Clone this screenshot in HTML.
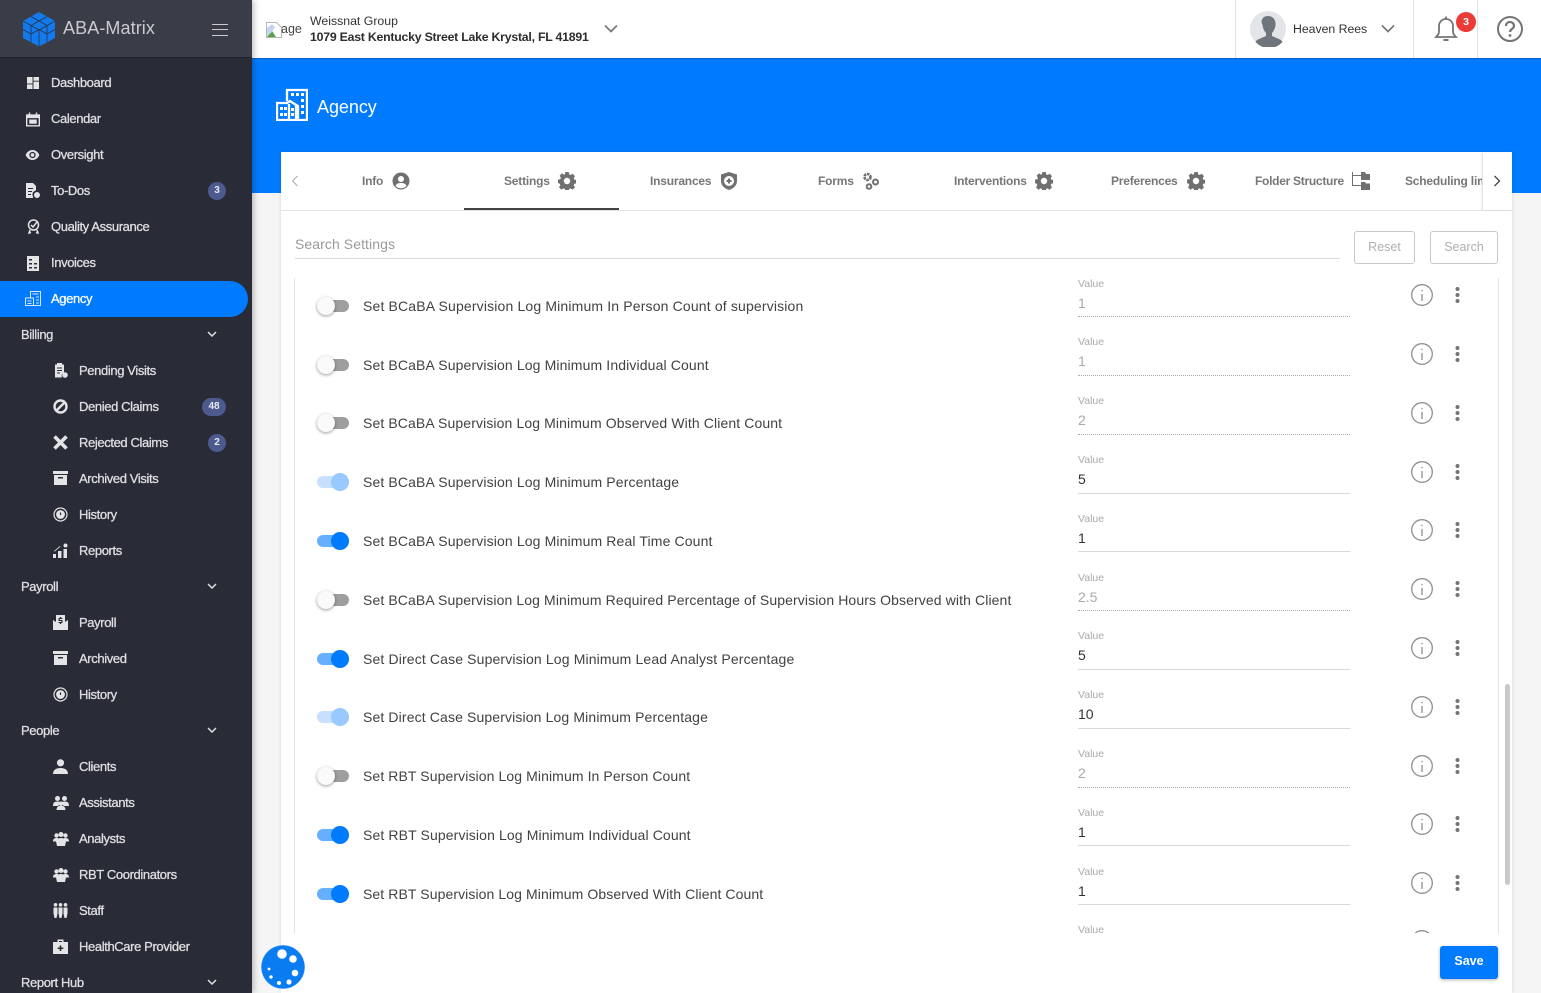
<!DOCTYPE html>
<html><head><meta charset="utf-8"><title>Agency</title>
<style>
html,body{margin:0;padding:0;width:1541px;height:993px;overflow:hidden;background:#f5f5f5;font-family:"Liberation Sans",sans-serif}
*{box-sizing:border-box}
.a{position:absolute}
#side{position:absolute;left:0;top:0;width:252px;height:993px;background:#292c37;box-shadow:2px 0 6px rgba(0,0,0,.25);overflow:hidden;z-index:5}
#sh{position:absolute;left:0;top:0;width:252px;height:58px;background:#3a3d48;border-bottom:1px solid #22242c}
.m{position:absolute;color:#dedfe2;font-size:13px;letter-spacing:-.38px;line-height:38px;height:36px;white-space:nowrap;-webkit-text-stroke:.3px #dedfe2}
.i{position:absolute;fill:#e3e4e6}
.b{position:absolute;height:18px;border-radius:9px;background:#4c5a8e;color:#e8eaf2;font-size:10px;font-weight:700;text-align:center;line-height:18px}
.ch{position:absolute;left:207px;width:10px;height:6px;fill:none;stroke:#dedfe2;stroke-width:1.5}
.tab{position:absolute;top:173px;font-size:12px;font-weight:700;color:#777;letter-spacing:-.2px;white-space:nowrap;line-height:16px}
.row{position:absolute;left:-1px;width:1210px;height:58px}
.tr{position:absolute;left:23px;top:17px;width:32px;height:12px;border-radius:6px}
.th{position:absolute;top:14px;width:18px;height:18px;border-radius:50%}
.off .tr{background:#9e9e9e}.off .th{left:23px;background:#fafafa;box-shadow:0 1px 3px rgba(0,0,0,.4)}
.on .tr{background:#66afff}.on .th{left:37px;background:#007bff}
.lt .tr{background:#c6e0fd}.lt .th{left:37px;background:#99caff}
.lb{position:absolute;left:69px;top:14px;font-size:14px;letter-spacing:.13px;color:#424242;line-height:18px;white-space:nowrap}
.p .lb{top:15px}.p .tr{top:18px}.p .th{top:15px}
.vl{position:absolute;left:784px;top:-5px;font-size:10.5px;color:#aaa;line-height:13px}
.v{position:absolute;left:784px;top:11px;font-size:14px;color:#333;line-height:18px}
.off .v{color:#aaa}
.ln{position:absolute;left:784px;top:33px;width:272px;height:1px;background:#d8d8d8}
.off .ln{height:0;background:none;border-top:1px dotted #aaa}
.inf{position:absolute;left:1116px;top:0;width:24px;height:24px;fill:none;stroke:#8f8f8f}
.keb{position:absolute;left:1161px;top:4px;width:5px;height:16px;fill:#757575}
.q .inf{top:1px}.q .keb{top:5px}.q .ln{top:34px}
</style></head><body>

<div id="side">
<div id="sh"></div>
<svg class="a" style="left:22px;top:11px" width="34" height="36" viewBox="0 0 34 36"><path d="M17 1l16 9v17l-16 8.500L1 27V10z" fill="#1479ea"/><path d="M1 10l16 9 16-9M17 19v16.500M9 5.500l16 9M25 5.500l-16 9M9 14.500v16.500M25 14.500v16.500M1 18.500l8 4.500 8-4.500 8 4.500 8-4.500" fill="none" stroke="#25344f" stroke-width=".8"/></svg>
<div class="a" style="left:63px;top:16px;font-size:18px;color:#c9cbd0;line-height:24px;letter-spacing:.1px">ABA-Matrix</div>
<div class="a" style="left:212px;top:24px;width:16px;height:12px;border-top:1.500px solid #c9cbd0;border-bottom:1.500px solid #c9cbd0"><div style="margin-top:3.500px;height:1.500px;background:#c9cbd0"></div></div>

<div class="a" style="left:0;top:281px;width:248px;height:36px;background:#007bff;border-radius:0 18px 18px 0"></div>

<div class="m" style="left:51px;top:64px">Dashboard</div>
<div class="m" style="left:51px;top:100px">Calendar</div>
<div class="m" style="left:51px;top:136px">Oversight</div>
<div class="m" style="left:51px;top:172px">To-Dos</div>
<div class="m" style="left:51px;top:208px">Quality Assurance</div>
<div class="m" style="left:51px;top:244px">Invoices</div>
<div class="m" style="left:51px;top:280px;color:#fff;-webkit-text-stroke:.3px #fff">Agency</div>
<div class="m" style="left:21px;top:316px">Billing</div>
<div class="m" style="left:79px;top:352px">Pending Visits</div>
<div class="m" style="left:79px;top:388px">Denied Claims</div>
<div class="m" style="left:79px;top:424px">Rejected Claims</div>
<div class="m" style="left:79px;top:460px">Archived Visits</div>
<div class="m" style="left:79px;top:496px">History</div>
<div class="m" style="left:79px;top:532px">Reports</div>
<div class="m" style="left:21px;top:568px">Payroll</div>
<div class="m" style="left:79px;top:604px">Payroll</div>
<div class="m" style="left:79px;top:640px">Archived</div>
<div class="m" style="left:79px;top:676px">History</div>
<div class="m" style="left:21px;top:712px">People</div>
<div class="m" style="left:79px;top:748px">Clients</div>
<div class="m" style="left:79px;top:784px">Assistants</div>
<div class="m" style="left:79px;top:820px">Analysts</div>
<div class="m" style="left:79px;top:856px">RBT Coordinators</div>
<div class="m" style="left:79px;top:892px">Staff</div>
<div class="m" style="left:79px;top:928px">HealthCare Provider</div>
<div class="m" style="left:21px;top:964px">Report Hub</div>

<svg class="ch" style="top:331px" viewBox="0 0 10 6"><path d="M1 1l4 4 4-4"/></svg>
<svg class="ch" style="top:583px" viewBox="0 0 10 6"><path d="M1 1l4 4 4-4"/></svg>
<svg class="ch" style="top:727px" viewBox="0 0 10 6"><path d="M1 1l4 4 4-4"/></svg>
<svg class="ch" style="top:979px" viewBox="0 0 10 6"><path d="M1 1l4 4 4-4"/></svg>

<div class="b" style="left:208px;top:182px;width:18px">3</div>
<div class="b" style="left:202px;top:398px;width:24px">48</div>
<div class="b" style="left:208px;top:434px;width:18px">2</div>

<!-- top icons -->
<svg class="i" style="left:27px;top:77px" width="12" height="12" viewBox="0 0 13 13"><path d="M0 0h6v7H0zM7 0h6v4H7zM7 5h6v8H7zM0 8h6v5H0z"/></svg>
<svg class="i" style="left:26px;top:112px" width="14" height="15" viewBox="0 0 15 15"><path fill-rule="evenodd" d="M3 0h1.500v2h6V0H12v2h3v13H0V2h3zM1.500 6v7.500h12V6zM3.500 7.500h8v4.500h-8z"/></svg>
<svg class="i" style="left:25px;top:150px" width="15" height="10" viewBox="0 0 15 11"><path fill-rule="evenodd" d="M7.500 0C11 0 14 2.500 15 5.500 14 8.500 11 11 7.500 11S1 8.500 0 5.500C1 2.500 4 0 7.500 0zm0 2a3.500 3.500 0 100 7 3.500 3.500 0 000-7zm0 1.500a2 2 0 110 4 2 2 0 010-4z"/></svg>
<svg class="i" style="left:26px;top:183px" width="14" height="15" viewBox="0 0 14 15"><path fill-rule="evenodd" d="M0 0h7l3 3v4.500a4 4 0 00-3 6V15H0zM2 5v1h5V5zM2 8v1h4V8zM2 11v1h3v-1z"/><circle cx="11" cy="12" r="3"/></svg>
<svg class="a" style="left:27px;top:219px" width="13" height="15" viewBox="0 0 13 15" fill="none" stroke="#e3e4e6" stroke-width="1.500"><circle cx="6.500" cy="6" r="5"/><path d="M4 6l2 2 4-5M3 11l-1 3 2-.5M10 11l1 3-2-.5"/></svg>
<svg class="i" style="left:27px;top:256px" width="12" height="15" viewBox="0 0 12 15"><path fill-rule="evenodd" d="M0 0h12v15H0zM2 3v1.500h3V3zM2 7v1.500h3V7zM7 7v1.500h3V7zM2 11v1.500h3V11zM7 11v1.500h3V11z"/></svg>
<svg class="a" style="left:25px;top:291px" width="16" height="15" viewBox="0 0 16 15" fill="none" stroke="#d5e8ff"><path d="M5.500 7V.5h10v14H.5V7h8v7.500M7.500 3h6M11 6h3M11 9h3M11 12h3M2.500 10h4M2.500 12.500h4"/></svg>

<!-- sub icons -->
<svg class="i" style="left:54px;top:363px" width="14" height="15" viewBox="0 0 14 15"><path fill-rule="evenodd" d="M3 0h5v1.500h2v8a3.500 3.500 0 00-2 5H1V1.500h2zM3 4.500v1h5v-1zM3 7v1h5V7zM3 9.500v1h3v-1z"/><circle cx="11" cy="12" r="2.800"/></svg>
<svg class="a" style="left:53px;top:399px" width="15" height="15" viewBox="0 0 15 15" fill="none" stroke="#e3e4e6" stroke-width="2.400"><circle cx="7.500" cy="7.500" r="6"/><path d="M3.500 11.500l8-8"/></svg>
<svg class="a" style="left:53px;top:435px" width="15" height="15" viewBox="0 0 15 15" fill="none" stroke="#e3e4e6" stroke-width="3.600"><path d="M1.500 1.500l12 12M13.500 1.500l-12 12"/></svg>
<svg class="i" style="left:53px;top:471px" width="15" height="14" viewBox="0 0 15 14"><path fill-rule="evenodd" d="M0 0h15v3H0zM1 4h13v10H1zM5 6v1.500h5V6z"/></svg>
<svg class="a" style="left:53px;top:507px" width="15" height="15" viewBox="0 0 15 15" fill="none" stroke="#e3e4e6" stroke-width="1.200"><circle cx="7.500" cy="7.500" r="6.500"/><circle cx="7.500" cy="7.500" r="3.800" fill="#e3e4e6"/><path d="M7.500 5.500v2.500" stroke="#292c37"/></svg>
<svg class="i" style="left:53px;top:543px" width="15" height="15" viewBox="0 0 15 15"><path d="M0 11h3v4H0zM5 8h3.500v7H5zM10.500 6H14v9h-3.500z"/><circle cx="12.500" cy="2.500" r="2"/><path d="M1 8l6-5 .5.600-6 5z"/></svg>
<svg class="i" style="left:53px;top:615px" width="15" height="15" viewBox="0 0 15 15"><path fill-rule="evenodd" d="M3 0h9v7l3-2v10H0V5l3 2zM6.800 2v1H5.500v3h2.800v1H5.500v1h1.300v1h1.400V8h1.300V5H6.700V4h2.800V3H8.200V2z"/></svg>
<svg class="i" style="left:53px;top:651px" width="15" height="14" viewBox="0 0 15 14"><path fill-rule="evenodd" d="M0 0h15v3H0zM1 4h13v10H1zM5 6v1.500h5V6z"/></svg>
<svg class="a" style="left:53px;top:687px" width="15" height="15" viewBox="0 0 15 15" fill="none" stroke="#e3e4e6" stroke-width="1.200"><circle cx="7.500" cy="7.500" r="6.500"/><circle cx="7.500" cy="7.500" r="3.800" fill="#e3e4e6"/><path d="M7.500 5.500v2.500" stroke="#292c37"/></svg>
<svg class="i" style="left:53px;top:759px" width="15" height="15" viewBox="0 0 15 15"><circle cx="7.500" cy="3.800" r="3.600"/><path d="M0 15c0-4 3-6 7.500-6S15 11 15 15z"/></svg>
<svg class="i" style="left:53px;top:796px" width="16" height="14" viewBox="0 0 16 14"><circle cx="4.500" cy="2.500" r="2.500"/><circle cx="11.500" cy="2.500" r="2.500"/><path d="M0 10c0-3 1-4.500 4.500-4.500S7 7 7 8L5 10zM16 10c0-3-1-4.500-4.500-4.500S9 7 9 8l2 2z"/><circle cx="8" cy="7.500" r="2"/><path d="M3.500 14c0-3 2-4.500 4.500-4.500s4.500 1.500 4.500 4.500z"/></svg>
<svg class="i" style="left:53px;top:832px" width="16" height="14" viewBox="0 0 16 14"><circle cx="3.500" cy="3.500" r="2.200"/><circle cx="12.500" cy="3.500" r="2.200"/><circle cx="8" cy="2.500" r="2.500"/><path d="M0 9.500c0-2.500 1.200-3.500 3.500-3.500 1 0 1.500.2 2 .5 1.500-.6 3.500-.6 5 0 .5-.3 1-.5 2-.5 2.300 0 3.500 1 3.500 3.500h-3L12 14H4l-1-4.500z"/></svg>
<svg class="i" style="left:53px;top:868px" width="16" height="14" viewBox="0 0 16 14"><circle cx="3.500" cy="3.500" r="2.200"/><circle cx="12.500" cy="3.500" r="2.200"/><circle cx="8" cy="2.500" r="2.500"/><path d="M0 9.500c0-2.500 1.200-3.500 3.500-3.500 1 0 1.500.2 2 .5 1.500-.6 3.500-.6 5 0 .5-.3 1-.5 2-.5 2.300 0 3.500 1 3.500 3.500h-3L12 14H4l-1-4.500z"/></svg>
<svg class="i" style="left:53px;top:903px" width="15" height="15" viewBox="0 0 15 15"><circle cx="2.500" cy="1.800" r="1.800"/><circle cx="7.500" cy="1.800" r="1.800"/><circle cx="12.500" cy="1.800" r="1.800"/><path d="M.5 4.500h4v6l-1 4.500h-2l-1-4.500zM5.500 4.500h4v6l-1 4.500h-2l-1-4.500zM10.500 4.500h4v6l-1 4.500h-2l-1-4.500z"/></svg>
<svg class="i" style="left:53px;top:939px" width="15" height="15" viewBox="0 0 15 15"><path fill-rule="evenodd" d="M4.500 3V.5h6V3H15v12H0V3zM6 3h3V2H6zM6.700 6.500v2h-2V10h2v2h1.600v-2h2V8.500h-2v-2z"/></svg>
</div>

<!-- top bar -->
<div class="a" style="left:252px;top:0;width:1289px;height:58px;background:#fff"></div>
<svg class="a" style="left:266px;top:22px" width="16" height="16" viewBox="0 0 16 16"><path d="M.5.500h10l5 5v10H.5z" fill="#fff" stroke="#b5b5b5"/><path d="M1 15l5-6 4 6z" fill="#5a9e4a"/><path d="M1 6l5-4 3 3-4 6-4 3z" fill="#c3d5f0"/></svg>
<div class="a" style="left:281px;top:21px;font-size:12.500px;color:#444;line-height:16px">age</div>
<div class="a" style="left:310px;top:14px;font-size:12.300px;color:#333;line-height:15px;white-space:nowrap">Weissnat Group</div>
<div class="a" style="left:310px;top:29px;font-size:12.300px;font-weight:700;color:#2d2d2d;line-height:16px;white-space:nowrap;letter-spacing:-.23px">1079 East Kentucky Street Lake Krystal, FL 41891</div>
<svg class="a" style="left:604px;top:24px" width="14" height="9" viewBox="0 0 14 9" fill="none" stroke="#777" stroke-width="1.700"><path d="M1 1.500l6 6 6-6"/></svg>

<div class="a" style="left:1235px;top:0;width:1px;height:58px;background:#e2e2e2"></div>
<div class="a" style="left:1413px;top:0;width:1px;height:58px;background:#e2e2e2"></div>
<div class="a" style="left:1477px;top:0;width:1px;height:58px;background:#e2e2e2"></div>
<svg class="a" style="left:1250px;top:11px" width="36" height="36" viewBox="0 0 36 36"><circle cx="18" cy="18" r="18" fill="#e3e5e9"/><path d="M18 5c5 0 8 4 7.500 9-.3 3-1.500 6-3.500 8v3l8 3.500c1.500.7 2 1.500 2.500 2.500A18 18 0 015.500 31c.5-1 1-1.800 2.500-2.500l8-3.500v-3c-2-2-3.200-5-3.500-8C10 9 13 5 18 5z" fill="#70757d"/></svg>
<div class="a" style="left:1293px;top:21px;font-size:12.300px;color:#333;line-height:16px;white-space:nowrap;letter-spacing:-.03px">Heaven Rees</div>
<svg class="a" style="left:1381px;top:24px" width="14" height="9" viewBox="0 0 14 9" fill="none" stroke="#777" stroke-width="1.700"><path d="M1 1.500l6 6 6-6"/></svg>
<svg class="a" style="left:1434px;top:15px" width="24" height="27" viewBox="0 0 24 27" fill="none" stroke="#757575" stroke-width="1.800"><path d="M2 22c2-2 3-3 3-6v-5c0-4 3-7 7-7s7 3 7 7v5c0 3 1 4 3 6z"/><path d="M12 1.500V4"/><path d="M9.500 25h5" stroke-width="2"/></svg>
<div class="a" style="left:1456px;top:12px;width:20px;height:20px;border-radius:50%;background:#ea3b36;color:#fff;font-size:10.500px;font-weight:700;line-height:20px;text-align:center">3</div>
<svg class="a" style="left:1496px;top:15px" width="28" height="28" viewBox="0 0 28 28" fill="none" stroke="#757575" stroke-width="2"><circle cx="14" cy="14" r="12"/><path d="M10 11c0-2.500 1.800-4 4-4s4 1.500 4 3.700c0 3.300-4 3.300-4 6.300" stroke-width="2.200"/><circle cx="14" cy="20.500" r="1.400" fill="#757575" stroke="none"/></svg>

<!-- blue band -->
<div class="a" style="left:252px;top:58px;width:1289px;height:135px;background:#007bff;border-top:1px solid #0a62c0"></div>
<svg class="a" style="left:276px;top:88px" width="32" height="33" viewBox="0 0 32 33"><path d="M11 13V2h20v30H1V15h10l3-2 3 2h0l5 3v14M13 32V16M20 32V17" fill="none" stroke="#fff" stroke-width="2.300"/><path fill="#fff" d="M15 5h3v3h-3zM20 5h3v3h-3zM25 5h3v3h-3zM25 11h3v3h-3zM25 17h3v3h-3zM25 23h3v3h-3zM4 19h3v3H4zM8 19h3v3H8zM4 25h3v3H4zM8 25h3v3H8zM15 20h3v3h-3zM15 25h3v3h-3z"/></svg>
<div class="a" style="left:317px;top:96px;font-size:18px;color:#fff;line-height:22px;letter-spacing:-.05px">Agency</div>

<!-- card -->
<div class="a" style="left:281px;top:152px;width:1231px;height:841px;background:#fff;box-shadow:0 0 4px rgba(0,0,0,.12)"></div>
<div class="a" style="left:281px;top:210px;width:1231px;height:1px;background:#e2e2e2"></div>
<div class="a" style="left:464px;top:208px;width:155px;height:2px;background:#424242"></div>

<svg class="a" style="left:291px;top:175px" width="8" height="12" viewBox="0 0 8 12" fill="none" stroke="#aaa" stroke-width="1"><path d="M6.500 1l-5 5 5 5"/></svg>

<div class="tab" style="left:362px">Info</div>
<svg class="a" style="left:392px;top:172px" width="18" height="18" viewBox="0 0 18 18"><circle cx="9" cy="9" r="8.500" fill="#707070"/><circle cx="9" cy="7" r="3" fill="#fff"/><path d="M3.500 14c1-2.500 3-3 5.500-3s4.500.5 5.500 3c-3 3-8 3-11 0z" fill="#fff"/></svg>
<div class="tab" style="left:504px">Settings</div>
<svg class="a gear" style="left:558px;top:172px" width="18" height="18" viewBox="0 0 18 18"><path fill="#707070" fill-rule="evenodd" d="M7.300 0h3.400l.4 2.300 1.500.7 2-1.300 2.400 2.400-1.300 2 .6 1.500 2.300.4v3.400l-2.300.4-.6 1.500 1.300 2-2.400 2.400-2-1.300-1.500.6-.4 2.300H7.300l-.4-2.300-1.500-.6-2 1.300L1 15.300l1.300-2-.6-1.500L0 11V7.600l2.300-.4.600-1.500L1.600 3.700 4 1.300l2 1.300 1-.4zM9 5.800a3.200 3.200 0 100 6.400 3.200 3.200 0 000-6.400z"/></svg>
<div class="tab" style="left:650px">Insurances</div>
<svg class="a" style="left:721px;top:172px" width="16" height="18" viewBox="0 0 16 18"><path fill="#707070" fill-rule="evenodd" d="M8 0l8 2.500V9c0 4.500-3.500 7.500-8 9-4.500-1.500-8-4.500-8-9V2.500zm0 4a5 5 0 100 10A5 5 0 008 4zM7 6.500h2V8h1.500v2H9v1.500H7V10H5.500V8H7z"/></svg>
<div class="tab" style="left:818px">Forms</div>
<svg class="a" style="left:862px;top:172px" width="18" height="18" viewBox="0 0 18 18" fill="none" stroke="#707070" stroke-width="2"><circle cx="5.500" cy="5" r="3" stroke-dasharray="2.500 .8" stroke-width="2.600"/><circle cx="13.500" cy="10" r="2.500"/><circle cx="7" cy="14.500" r="2.300"/></svg>
<div class="tab" style="left:954px">Interventions</div>
<svg class="a" style="left:1035px;top:172px" width="18" height="18" viewBox="0 0 18 18"><path fill="#707070" fill-rule="evenodd" d="M7.300 0h3.400l.4 2.300 1.500.7 2-1.300 2.400 2.400-1.300 2 .6 1.500 2.300.4v3.400l-2.300.4-.6 1.500 1.300 2-2.400 2.400-2-1.300-1.500.6-.4 2.300H7.300l-.4-2.300-1.500-.6-2 1.300L1 15.300l1.300-2-.6-1.500L0 11V7.600l2.300-.4.600-1.500L1.600 3.700 4 1.300l2 1.300 1-.4zM9 5.800a3.200 3.200 0 100 6.400 3.200 3.200 0 000-6.400z"/></svg>
<div class="tab" style="left:1111px">Preferences</div>
<svg class="a" style="left:1187px;top:172px" width="18" height="18" viewBox="0 0 18 18"><path fill="#707070" fill-rule="evenodd" d="M7.300 0h3.400l.4 2.300 1.500.7 2-1.300 2.400 2.400-1.300 2 .6 1.500 2.300.4v3.400l-2.300.4-.6 1.500 1.300 2-2.400 2.400-2-1.300-1.500.6-.4 2.300H7.300l-.4-2.300-1.500-.6-2 1.300L1 15.300l1.300-2-.6-1.500L0 11V7.600l2.300-.4.600-1.500L1.600 3.700 4 1.300l2 1.300 1-.4zM9 5.800a3.200 3.200 0 100 6.400 3.200 3.200 0 000-6.400z"/></svg>
<div class="tab" style="left:1255px;letter-spacing:-.28px">Folder Structure</div>
<svg class="a" style="left:1352px;top:171px" width="18" height="19" viewBox="0 0 18 19"><path d="M.5 1v13.500H9M.5 4.500H9" fill="none" stroke="#707070"/><path d="M9 1h4l1 2h4v6H9zM9 11h4l1 1.500h4V19H9z" fill="#707070"/></svg>
<div class="a" style="left:1405px;top:173px;width:78px;height:16px;overflow:hidden;font-size:12px;font-weight:700;color:#777;letter-spacing:-.2px;white-space:nowrap;line-height:16px">Scheduling limits</div>
<div class="a" style="left:1482px;top:153px;width:30px;height:57px;background:#fff;border-left:1px solid #e4e4e4;box-shadow:-1px 0 2px rgba(0,0,0,.05)"></div>
<svg class="a" style="left:1493px;top:175px" width="8" height="12" viewBox="0 0 8 12" fill="none" stroke="#444" stroke-width="1.300"><path d="M1.500 1l5 5-5 5"/></svg>

<!-- search -->
<div class="a" style="left:295px;top:236px;font-size:14px;color:#9a9a9a;line-height:16px;letter-spacing:.08px">Search Settings</div>
<div class="a" style="left:295px;top:258px;width:1045px;height:1px;background:#dcdcdc"></div>
<div class="a" style="left:1354px;top:231px;width:61px;height:33px;border:1px solid #c8c8c8;border-radius:3px;color:#b0b0b0;font-size:12.500px;text-align:center;line-height:30px">Reset</div>
<div class="a" style="left:1430px;top:231px;width:68px;height:33px;border:1px solid #c8c8c8;border-radius:3px;color:#b0b0b0;font-size:12.500px;text-align:center;line-height:30px">Search</div>

<!-- list -->
<div class="a" style="left:294px;top:278px;width:1205px;height:655px;border-left:1px solid #e4e4e4;border-right:1px solid #e4e4e4;overflow:hidden">
<div class="row off" style="top:5px"><div class="tr"></div><div class="th"></div><div class="lb" style="letter-spacing:.158px">Set BCaBA Supervision Log Minimum In Person Count of supervision</div><div class="vl">Value</div><div class="v">1</div><div class="ln"></div><svg class="inf" viewBox="0 0 24 24"><circle cx="12" cy="12" r="10.300" stroke-width="1.300"/><path d="M12 11v7" stroke-width="1.300"/><circle cx="12" cy="7.500" r=".8" fill="#8f8f8f" stroke="none"/></svg><svg class="keb" viewBox="0 0 5 16"><circle cx="2.500" cy="2" r="2"/><circle cx="2.500" cy="8" r="2"/><circle cx="2.500" cy="14" r="2"/></svg></div>
<div class="row off p q" style="top:63px"><div class="tr"></div><div class="th"></div><div class="lb" style="letter-spacing:.13px">Set BCaBA Supervision Log Minimum Individual Count</div><div class="vl">Value</div><div class="v">1</div><div class="ln"></div><svg class="inf" viewBox="0 0 24 24"><circle cx="12" cy="12" r="10.300" stroke-width="1.300"/><path d="M12 11v7" stroke-width="1.300"/><circle cx="12" cy="7.500" r=".8" fill="#8f8f8f" stroke="none"/></svg><svg class="keb" viewBox="0 0 5 16"><circle cx="2.500" cy="2" r="2"/><circle cx="2.500" cy="8" r="2"/><circle cx="2.500" cy="14" r="2"/></svg></div>
<div class="row off q" style="top:122px"><div class="tr"></div><div class="th"></div><div class="lb" style="letter-spacing:.113px">Set BCaBA Supervision Log Minimum Observed With Client Count</div><div class="vl">Value</div><div class="v">2</div><div class="ln"></div><svg class="inf" viewBox="0 0 24 24"><circle cx="12" cy="12" r="10.300" stroke-width="1.300"/><path d="M12 11v7" stroke-width="1.300"/><circle cx="12" cy="7.500" r=".8" fill="#8f8f8f" stroke="none"/></svg><svg class="keb" viewBox="0 0 5 16"><circle cx="2.500" cy="2" r="2"/><circle cx="2.500" cy="8" r="2"/><circle cx="2.500" cy="14" r="2"/></svg></div>
<div class="row lt q" style="top:181px"><div class="tr"></div><div class="th"></div><div class="lb" style="letter-spacing:.13px">Set BCaBA Supervision Log Minimum Percentage</div><div class="vl">Value</div><div class="v">5</div><div class="ln"></div><svg class="inf" viewBox="0 0 24 24"><circle cx="12" cy="12" r="10.300" stroke-width="1.300"/><path d="M12 11v7" stroke-width="1.300"/><circle cx="12" cy="7.500" r=".8" fill="#8f8f8f" stroke="none"/></svg><svg class="keb" viewBox="0 0 5 16"><circle cx="2.500" cy="2" r="2"/><circle cx="2.500" cy="8" r="2"/><circle cx="2.500" cy="14" r="2"/></svg></div>
<div class="row on" style="top:240px"><div class="tr"></div><div class="th"></div><div class="lb" style="letter-spacing:.13px">Set BCaBA Supervision Log Minimum Real Time Count</div><div class="vl">Value</div><div class="v">1</div><div class="ln"></div><svg class="inf" viewBox="0 0 24 24"><circle cx="12" cy="12" r="10.300" stroke-width="1.300"/><path d="M12 11v7" stroke-width="1.300"/><circle cx="12" cy="7.500" r=".8" fill="#8f8f8f" stroke="none"/></svg><svg class="keb" viewBox="0 0 5 16"><circle cx="2.500" cy="2" r="2"/><circle cx="2.500" cy="8" r="2"/><circle cx="2.500" cy="14" r="2"/></svg></div>
<div class="row off" style="top:299px"><div class="tr"></div><div class="th"></div><div class="lb" style="letter-spacing:.109px">Set BCaBA Supervision Log Minimum Required Percentage of Supervision Hours Observed with Client</div><div class="vl">Value</div><div class="v">2.5</div><div class="ln"></div><svg class="inf" viewBox="0 0 24 24"><circle cx="12" cy="12" r="10.300" stroke-width="1.300"/><path d="M12 11v7" stroke-width="1.300"/><circle cx="12" cy="7.500" r=".8" fill="#8f8f8f" stroke="none"/></svg><svg class="keb" viewBox="0 0 5 16"><circle cx="2.500" cy="2" r="2"/><circle cx="2.500" cy="8" r="2"/><circle cx="2.500" cy="14" r="2"/></svg></div>
<div class="row on p q" style="top:357px"><div class="tr"></div><div class="th"></div><div class="lb" style="letter-spacing:.14px">Set Direct Case Supervision Log Minimum Lead Analyst Percentage</div><div class="vl">Value</div><div class="v">5</div><div class="ln"></div><svg class="inf" viewBox="0 0 24 24"><circle cx="12" cy="12" r="10.300" stroke-width="1.300"/><path d="M12 11v7" stroke-width="1.300"/><circle cx="12" cy="7.500" r=".8" fill="#8f8f8f" stroke="none"/></svg><svg class="keb" viewBox="0 0 5 16"><circle cx="2.500" cy="2" r="2"/><circle cx="2.500" cy="8" r="2"/><circle cx="2.500" cy="14" r="2"/></svg></div>
<div class="row lt q" style="top:416px"><div class="tr"></div><div class="th"></div><div class="lb" style="letter-spacing:.13px">Set Direct Case Supervision Log Minimum Percentage</div><div class="vl">Value</div><div class="v">10</div><div class="ln"></div><svg class="inf" viewBox="0 0 24 24"><circle cx="12" cy="12" r="10.300" stroke-width="1.300"/><path d="M12 11v7" stroke-width="1.300"/><circle cx="12" cy="7.500" r=".8" fill="#8f8f8f" stroke="none"/></svg><svg class="keb" viewBox="0 0 5 16"><circle cx="2.500" cy="2" r="2"/><circle cx="2.500" cy="8" r="2"/><circle cx="2.500" cy="14" r="2"/></svg></div>
<div class="row off q" style="top:475px"><div class="tr"></div><div class="th"></div><div class="lb" style="letter-spacing:.096px">Set RBT Supervision Log Minimum In Person Count</div><div class="vl">Value</div><div class="v">2</div><div class="ln"></div><svg class="inf" viewBox="0 0 24 24"><circle cx="12" cy="12" r="10.300" stroke-width="1.300"/><path d="M12 11v7" stroke-width="1.300"/><circle cx="12" cy="7.500" r=".8" fill="#8f8f8f" stroke="none"/></svg><svg class="keb" viewBox="0 0 5 16"><circle cx="2.500" cy="2" r="2"/><circle cx="2.500" cy="8" r="2"/><circle cx="2.500" cy="14" r="2"/></svg></div>
<div class="row on" style="top:534px"><div class="tr"></div><div class="th"></div><div class="lb" style="letter-spacing:.12px">Set RBT Supervision Log Minimum Individual Count</div><div class="vl">Value</div><div class="v">1</div><div class="ln"></div><svg class="inf" viewBox="0 0 24 24"><circle cx="12" cy="12" r="10.300" stroke-width="1.300"/><path d="M12 11v7" stroke-width="1.300"/><circle cx="12" cy="7.500" r=".8" fill="#8f8f8f" stroke="none"/></svg><svg class="keb" viewBox="0 0 5 16"><circle cx="2.500" cy="2" r="2"/><circle cx="2.500" cy="8" r="2"/><circle cx="2.500" cy="14" r="2"/></svg></div>
<div class="row on" style="top:593px"><div class="tr"></div><div class="th"></div><div class="lb" style="letter-spacing:.09px">Set RBT Supervision Log Minimum Observed With Client Count</div><div class="vl">Value</div><div class="v">1</div><div class="ln"></div><svg class="inf" viewBox="0 0 24 24"><circle cx="12" cy="12" r="10.300" stroke-width="1.300"/><path d="M12 11v7" stroke-width="1.300"/><circle cx="12" cy="7.500" r=".8" fill="#8f8f8f" stroke="none"/></svg><svg class="keb" viewBox="0 0 5 16"><circle cx="2.500" cy="2" r="2"/><circle cx="2.500" cy="8" r="2"/><circle cx="2.500" cy="14" r="2"/></svg></div>
<div class="row off" style="top:651px"><div class="vl">Value</div><svg class="inf" viewBox="0 0 24 24"><circle cx="12" cy="12" r="10.300" stroke-width="1.300"/></svg></div>
</div>

<!-- scrollbar -->
<div class="a" style="left:1505px;top:684px;width:5px;height:201px;border-radius:3px;background:#c9c9c9"></div>

<!-- save -->
<div class="a" style="left:1440px;top:946px;width:58px;height:33px;background:#007bff;border-radius:3px;color:#fff;font-size:12.500px;font-weight:700;text-align:center;line-height:31px;box-shadow:0 1px 3px rgba(0,0,0,.3)">Save</div>

<!-- cookie -->
<svg class="a" style="left:260px;top:944px;z-index:6" width="46" height="46" viewBox="0 0 46 46"><circle cx="23" cy="23" r="22" fill="#0a7cf2" stroke="#fff" stroke-opacity=".5"/><g fill="#fff"><circle cx="22" cy="10" r="4.800"/><circle cx="33" cy="15" r="3.800"/><circle cx="35" cy="29" r="3.300"/><circle cx="29" cy="38" r="2.600"/><circle cx="19" cy="39" r="2"/><circle cx="11" cy="33" r="1.700"/><circle cx="9" cy="25" r="1.400"/></g></svg>

</body></html>
